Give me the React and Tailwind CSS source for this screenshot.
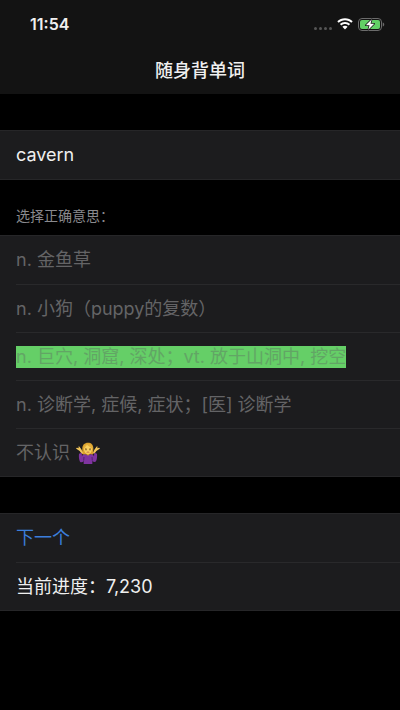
import clsx from "clsx";

const options = [
  { id: 1, text: "n. 金鱼草" },
  { id: 2, text: "n. 小狗（puppy的复数）" },
  { id: 3, text: "n. 巨穴, 洞窟, 深处；vt. 放于山洞中, 挖空", correct: true },
  { id: 4, text: "n. 诊断学, 症候, 症状；[医] 诊断学" },
  { id: 5, text: "不认识", shrug: true },
];

function WifiIcon() {
  return (
    <svg viewBox="0 0 32 24" className="w-4 h-3" fill="white">
      <path d="M16 0.5C10 0.5 4.6 2.8 0.6 6.6l2.8 3C6.700 6.500 11.100 4.700 16 4.700s9.300 1.800 12.600 4.900l2.800-3C27.400 2.800 22 0.500 16 0.500z" />
      <path d="M16 8c-3.900 0-7.500 1.500-10.200 4l2.900 3.100C10.600 13.300 13.200 12.200 16 12.200s5.400 1.100 7.300 2.900l2.900-3.100C23.500 9.500 19.900 8 16 8z" />
      <path d="M16 15.400c-2 0-3.900 0.800-5.200 2.100L16 23.200l5.200-5.700C19.900 16.200 18 15.400 16 15.400z" />
    </svg>
  );
}

function BatteryIcon() {
  return (
    <svg viewBox="0 0 54 26" className="w-[27px] h-[13px]">
      <rect x="1" y="1" width="46" height="24" rx="7" fill="none" stroke="#6b6b6b" strokeWidth="2" />
      <rect x="4" y="4" width="40" height="18" rx="4" fill="#62d066" />
      <path d="M49.500 9v8c1.800-0.600 3-2.100 3-4s-1.200-3.400-3-4z" fill="#6b6b6b" />
      <path
        d="M27.500 2.500L15.500 14.500h7.500l-2.500 9L32.500 11.500H25z"
        fill="white"
        stroke="#131313"
        strokeWidth="3"
        strokeLinejoin="round"
        paintOrder="stroke"
      />
    </svg>
  );
}

function ShrugIcon() {
  return (
    <svg viewBox="0 0 72 66" className="w-6 h-[22px]" role="img" aria-label="shrug">
      {/* hair */}
      <path d="M36 2C25 2 19 9 19 19c0 7 0 12-2 16 5 4 11 4 17 2h8c5 2 8 1 11-2-2-4-1-9-1-16C52 8 46 2 36 2z" fill="#d9a02c" />
      {/* hands */}
      <path d="M17 35L11 27 2 21c-2-1-2-4 1-4l6 2-2-4c0-2 3-2 4 0l5 7 5 10z" fill="#f3c65a" />
      <path d="M55 35l6-8 9-6c2-1 2-4-1-4l-6 2 2-4c0-2-3-2-4 0l-5 7-5 10z" fill="#f3c65a" />
      {/* shirt */}
      <path d="M25 37c-4 1-6 3-7 6l-1-11-8 3c-1 9 0 18 3 24 3 3 8 2 11-2v9h26v-9c4 4 9 4 11 1 3-6 4-15 3-23l-8-3-1 11c-1-3-4-5-8-6l-10 3z" fill="#7f349f" />
      <path d="M23 56l1-11M49 56l-1-11" stroke="#532070" strokeWidth="3" fill="none" />
      <path d="M29 35l7 6 7-6-3-3h-8z" fill="#dfa631" />
      {/* face */}
      <ellipse cx="36" cy="22" rx="12" ry="14" fill="#f8d060" />
      <path d="M22 23c2-7 8-9 11-15 5 6 14 6 17 15 1-12-5-18-14-18S21 12 22 23z" fill="#e4ae3a" />
      <path d="M27 20q3-2 5 0M40 20q3-2 5 0" stroke="#99661c" strokeWidth="2" fill="none" />
      <circle cx="30" cy="23" r="2" fill="#5b3815" />
      <circle cx="42" cy="23" r="2" fill="#5b3815" />
      <path d="M32 31q4-2 8 0" stroke="#b64832" strokeWidth="2" fill="none" />
    </svg>
  );
}

function StatusBar() {
  return (
    <div className="flex items-center justify-between h-12 pl-[30px] pr-[15px]">
      <span className="text-base font-semibold">11:54</span>
      <div className="flex items-center gap-[5px]">
        <div className="flex gap-[2px] pt-2">
          {[0, 1, 2, 3].map((dot) => (
            <span key={dot} className="w-[3px] h-[3px] rounded-full bg-[#555]" />
          ))}
        </div>
        <WifiIcon />
        <BatteryIcon />
      </div>
    </div>
  );
}

export default function App() {
  return (
    <div className="min-h-screen bg-black text-[#efefef] text-lg leading-[22px] font-['Inter','Noto_Sans_CJK_SC',sans-serif]">
      <header className="bg-[#131313]">
        <StatusBar />
        <h1 className="h-[46px] flex items-center justify-center font-medium">
          随身背单词
        </h1>
      </header>

      <main className="pt-9">
        <section className="bg-[#1c1c1e] border-y border-[#262628]">
          <p className="h-12 px-4 flex items-center">cavern</p>
        </section>

        <h2 className="pt-[26px] pb-[9px] px-4 text-sm text-[#8a8a8e]">
          选择正确意思：
        </h2>

        <ul className="bg-[#1c1c1e] border-y border-[#262628] pl-4">
          {options.map((option, idx) => (
            <li
              key={option.id}
              className={clsx("h-12", idx > 0 && "border-t border-[#29292b]")}
            >
              <button
                type="button"
                disabled
                className="w-full h-full flex items-center gap-[6px] text-left text-[#646466]"
              >
                <span className={clsx(option.correct && "bg-[#65cf67] text-[#62a565]")}>
                  {option.text}
                </span>
                {option.shrug && <ShrugIcon />}
              </button>
            </li>
          ))}
        </ul>

        <section className="mt-9 bg-[#1c1c1e] border-y border-[#262628] pl-4">
          <button
            type="button"
            className="w-full h-12 flex items-center text-left text-[#3b7edb]"
          >
            下一个
          </button>
          <p className="h-12 flex items-center border-t border-[#29292b]">
            当前进度：7,230
          </p>
        </section>
      </main>
    </div>
  );
}
